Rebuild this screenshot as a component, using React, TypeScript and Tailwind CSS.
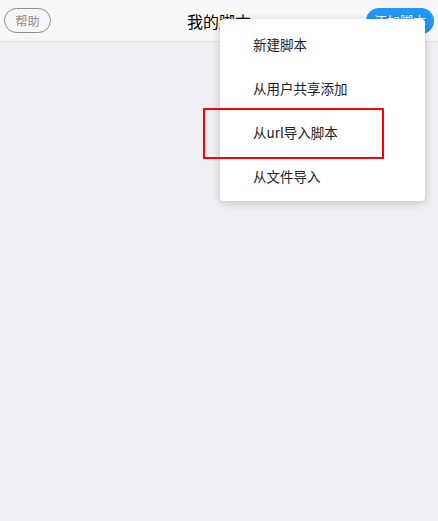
export default function App() {
  const items = ['新建脚本', '从用户共享添加', '从url导入脚本', '从文件导入'];
  const font = { fontFamily: '"Noto Sans CJK SC", "Noto Sans", sans-serif' };

  return (
    <div className="relative w-[438px] h-[521px] bg-[#efeff4] overflow-hidden" style={font}>
      {/* Header */}
      <header className="h-[42px] bg-[#f7f7f7] border-b border-[#e2e2e2] grid grid-cols-[1fr_auto_1fr] items-center px-[4px]">
        <div className="flex">
          <button className="h-[25px] w-[47px] rounded-full border border-[#8e8e8e] text-[12px] text-[#8a8a8a] flex items-center justify-center leading-none">
            帮助
          </button>
        </div>
        <h1 className="text-[16px] text-black leading-none">我的脚本</h1>
        <div className="flex justify-end">
          <button className="h-[26px] w-[68px] rounded-full bg-[#2196f3] text-white text-[13px] flex items-center justify-center leading-none">
            添加脚本
          </button>
        </div>
      </header>

      {/* Dropdown menu */}
      <div className="absolute top-[19px] left-[220px] w-[205px] bg-white rounded-[4px] shadow-[0_2px_8px_rgba(0,0,0,0.2)] py-[3px]">
        {items.map((label) => (
          <div key={label} className="h-[44px] flex items-center pl-[33px] text-[13.5px] text-[#222]">
            {label}
          </div>
        ))}
      </div>

      {/* Highlight box */}
      <div className="absolute top-[108px] left-[203px] w-[181px] h-[51px] border-2 border-[#ff0000]" />
    </div>
  );
}
